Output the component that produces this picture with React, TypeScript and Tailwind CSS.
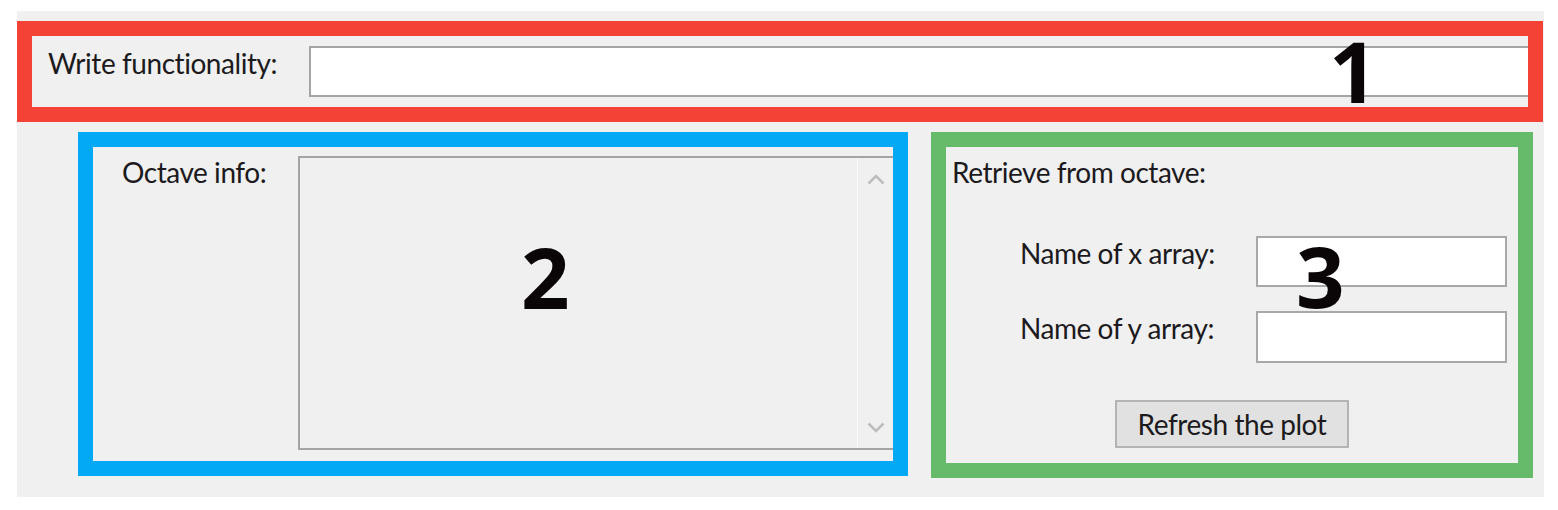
import React from 'react';

const labelFont = { fontFamily: 'Lato, "Liberation Sans", sans-serif' };
const digitFont = { fontFamily: '"Open Sans", "Noto Sans", sans-serif' };

function Chevron({ up }: { up?: boolean }) {
  return (
    <svg width="18" height="11" viewBox="0 0 18 11" fill="none">
      <path
        d={up ? 'M1.5 9.5 L9 2 L16.5 9.5' : 'M1.5 1.5 L9 9 L16.5 1.5'}
        stroke="#bdbdbd"
        strokeWidth="2.6"
      />
    </svg>
  );
}

function BigDigit({ value, className }: { value: string; className: string }) {
  return (
    <span
      className={`absolute w-[100px] text-center text-[85px] leading-none font-bold text-[#0a0506] ${className}`}
      style={digitFont}
    >
      {value}
    </span>
  );
}

export default function App() {
  return (
    <div className="w-full h-[510px] bg-white overflow-hidden" style={labelFont}>
      <div className="relative ml-[17px] mt-[11px] w-[1527px] h-[486px] bg-[#f0f0f0] flex flex-col text-[28px] leading-[34px] tracking-[-0.45px] text-[#1c1a1d]">
        {/* 1: command input */}
        <div className="mt-[10px] w-[1526px] h-[101px] border-[15px] border-[#f44336] flex items-start">
          <div className="w-[277px] pl-[16px] pt-[10px] shrink-0">Write functionality:</div>
          <div className="mt-[10px] h-[51px] flex-1 bg-white border-2 border-r-0 border-[#a4a4a4]" />
        </div>

        <div className="mt-[10px] flex items-start">
          {/* 2: octave info */}
          <div className="ml-[61px] w-[830px] h-[344px] border-[15px] border-[#03a9f4] flex">
            <div className="w-[205px] pl-[29px] pt-[8px] shrink-0">Octave info:</div>
            <div className="mt-[9px] mb-[11px] flex-1 flex border-2 border-r-0 border-[#a4a4a4] bg-[#f0f0f0]">
              <div className="flex-1" />
              <div className="w-[36px] border-l border-[#fbfbfb] flex flex-col items-center justify-between pt-[16px] pb-[15px]">
                <Chevron up />
                <Chevron />
              </div>
            </div>
          </div>

          {/* 3: retrieve from octave */}
          <div className="ml-[23px] w-[602px] h-[346px] border-[15px] border-[#66bb6a] flex flex-col">
            <div className="pl-[6px] pt-[8px]">Retrieve from octave:</div>
            <div className="mt-[47px] flex items-start">
              <div className="w-[310px] pl-[74px] shrink-0">Name of x array:</div>
              <div className="w-[251px] h-[51px] bg-white border-2 border-[#a8a8a8]" />
            </div>
            <div className="mt-[24px] flex items-start">
              <div className="w-[310px] pl-[74px] shrink-0">Name of y array:</div>
              <div className="w-[251px] h-[52px] bg-white border-2 border-[#a8a8a8]" />
            </div>
            <div className="mt-[37px] flex justify-center">
              <button className="w-[234px] h-[48px] bg-[#e1e1e1] border-2 border-[#b4b4b4] flex items-center justify-center">
                Refresh the plot
              </button>
            </div>
          </div>
        </div>

        <BigDigit value="1" className="left-[1286px] top-[17px]" />
        <BigDigit value="2" className="left-[478px] top-[223px]" />
        <BigDigit value="3" className="left-[1253px] top-[222px]" />
      </div>
    </div>
  );
}
